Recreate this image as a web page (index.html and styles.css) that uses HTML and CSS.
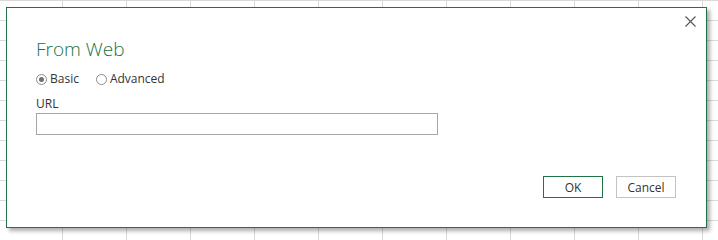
FILE: index.html
```html
<!DOCTYPE html>
<html lang="en">
<head>
<meta charset="utf-8">
<title>From Web</title>
<link rel="stylesheet" href="styles.css">
</head>
<body>
<div class="dialog">
  <div class="topbar">
    <button class="close" aria-label="Close">
      <svg width="11" height="11" viewBox="0 0 11 11"><path d="M0.5 0.5 L10.5 10.5 M10.5 0.5 L0.5 10.5" stroke="#555" stroke-width="1.1" fill="none"/></svg>
    </button>
  </div>
  <div class="content">
    <h1 class="title">From Web</h1>
    <div class="radios">
      <label class="option"><span class="radio checked"></span><span>Basic</span></label>
      <label class="option"><span class="radio"></span><span>Advanced</span></label>
    </div>
    <div class="field-label">URL</div>
    <div class="input"></div>
  </div>
  <div class="footer">
    <button class="btn primary">OK</button>
    <button class="btn">Cancel</button>
  </div>
</div>
</body>
</html>
```
FILE: styles.css
```css
html, body {
  margin: 0;
  height: 100%;
}
body {
  background-color: #fff;
  background-image:
    linear-gradient(to right, #dadada 1px, transparent 1px),
    linear-gradient(to bottom, #dadada 1px, transparent 1px);
  background-size: 64px 100%, 100% 20px;
  background-position: 62px 0, 0 0;
  font-family: "Open Sans", "Noto Sans", sans-serif;
  color: #333;
  overflow: hidden;
}
.dialog {
  margin: 7px 0 0 6px;
  width: 701px;
  height: 221px;
  box-sizing: border-box;
  border: 1px solid #217346;
  background: #fff;
  box-shadow: 3px 3px 4px rgba(0, 0, 0, 0.32);
  display: flex;
  flex-direction: column;
}
.topbar {
  display: flex;
  justify-content: flex-end;
  padding: 8px 10px 0 0;
}
.close {
  border: 0;
  background: none;
  padding: 0;
  width: 11px;
  height: 11px;
  display: block;
}
.close svg { display: block; }
.content {
  padding-left: 29px;
}
.title {
  margin: 10px 0 0;
  font-size: 19px;
  line-height: 24px;
  font-weight: 300;
  color: #217346;
}
.radios {
  display: flex;
  gap: 17px;
  margin-top: 10px;
  font-size: 12px;
  line-height: 16px;
}
.option {
  display: flex;
  align-items: center;
  gap: 3px;
}
.radio {
  width: 11px;
  height: 11px;
  box-sizing: border-box;
  border: 1px solid #8c8c8c;
  border-radius: 50%;
  display: flex;
  align-items: center;
  justify-content: center;
}
.radio.checked::after {
  content: "";
  width: 5px;
  height: 5px;
  border-radius: 50%;
  background: #707070;
}
.field-label {
  margin-top: 9px;
  font-size: 12px;
  line-height: 16px;
}
.input {
  margin-top: 1px;
  width: 402px;
  height: 22px;
  box-sizing: border-box;
  border: 1px solid #a6a6a6;
  background: #fff;
}
.footer {
  margin-top: auto;
  display: flex;
  justify-content: flex-end;
  gap: 13px;
  padding: 0 30px 29px 0;
}
.btn {
  width: 60px;
  height: 22px;
  box-sizing: border-box;
  border: 1px solid #c3c3c3;
  background: #fff;
  font-family: inherit;
  font-size: 12px;
  color: #333;
  padding: 0;
}
.btn.primary {
  border-color: #217346;
}
```
